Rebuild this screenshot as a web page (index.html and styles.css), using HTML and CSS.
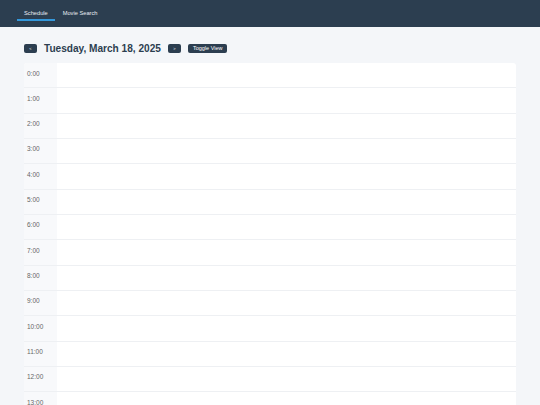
FILE: index.html
```html
<!DOCTYPE html>
<html lang="en">
<head>
    <meta charset="UTF-8">
    <meta name="viewport" content="width=device-width, initial-scale=1.0">
    <link rel="stylesheet" href="styles.css">
    <title>Schedule</title>
</head>
<body>

    <nav class="topbar">
        <a class="tab active" href="#">Schedule</a>
        <a class="tab" href="#">Movie Search</a>
    </nav>

    <main class="page">
        <div class="day-header">
            <button class="btn btn-small">&lt;</button>
            <h2 class="day-title">Tuesday, March 18, 2025</h2>
            <button class="btn btn-small">&gt;</button>
            <button class="btn">Toggle View</button>
        </div>

        <div class="calendar" id="calendar"></div>
    </main>

    <script>
        var calendar = document.getElementById("calendar");
        for (var h = 0; h < 24; h++) {
            var row = document.createElement("div");
            row.className = "hour-row";
            row.innerHTML = '<div class="hour-label">' + h + ':00</div><div class="hour-slot"></div>';
            calendar.appendChild(row);
        }
    </script>
</body>
</html>
```

FILE: styles.css
```css
body {
    margin: 0;
    font-family: 'Liberation Sans', Arial, sans-serif;
    background-color: #f4f6f9;
    color: #2c3e50;
}

.topbar {
    background-color: #2c3e50;
    height: 27px;
    display: flex;
    align-items: flex-start;
    padding: 0 17px;
    gap: 1px;
}

.tab {
    color: #e8edf2;
    text-decoration: none;
    font-size: 5.7px;
    padding: 7px 7px 0 7px;
    height: 21px;
    display: flex;
    align-items: center;
    border-bottom: 2px solid transparent;
    box-sizing: border-box;
}

.tab.active {
    border-bottom-color: #3498db;
}

.page {
    padding: 16px 24px 0 24px;
}

.day-header {
    display: flex;
    align-items: center;
    gap: 7px;
    height: 10px;
    margin-bottom: 10px;
}

.day-title {
    margin: 0;
    font-size: 10.1px;
    font-weight: bold;
    color: #2c3e50;
}

.btn {
    background-color: #2c3e50;
    color: #fff;
    border: none;
    border-radius: 2px;
    font-family: 'Liberation Sans', Arial, sans-serif;
    font-size: 5.5px;
    height: 9px;
    padding: 0 5px;
    line-height: 9px;
    cursor: pointer;
}

.btn-small {
    width: 13px;
    padding: 0;
    font-size: 4px;
}

.calendar {
    width: 492px;
    background-color: #fff;
    border-radius: 3px;
    overflow: hidden;
}

.hour-row {
    display: flex;
    height: 25.33px;
    box-sizing: border-box;
    border-bottom: 1px solid #eef0f3;
}

.hour-label {
    width: 33px;
    background-color: #f8f9fb;
    font-size: 6.5px;
    color: #666;
    padding: 6.5px 0 0 3px;
    box-sizing: border-box;
}

.hour-slot {
    flex: 1;
}
```
